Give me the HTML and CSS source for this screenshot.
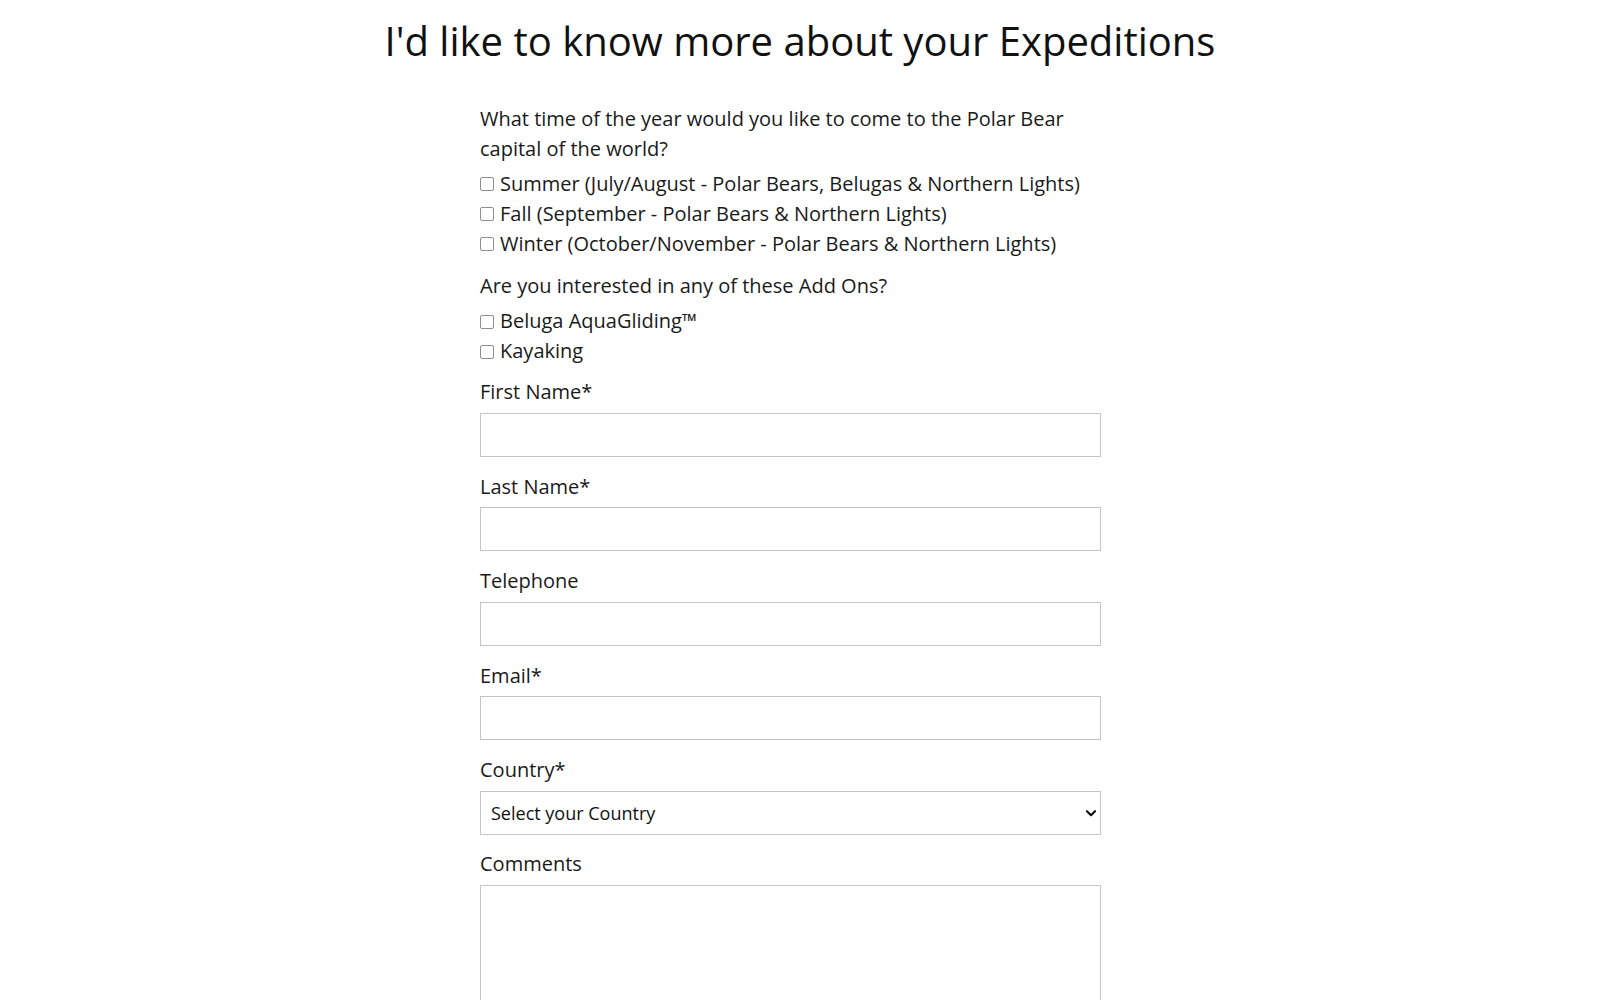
FILE: index.html
```html
<!DOCTYPE html>
<html lang="en">
<head>
<meta charset="utf-8">
<title>Expeditions enquiry</title>
<link rel="stylesheet" href="styles.css">
</head>
<body>
<h1 class="title">I'd like to know more about your Expeditions</h1>
<form class="enquiry">
  <p class="question">What time of the year would you like to come to the Polar Bear capital of the world?</p>
  <div class="options options-season">
    <label class="option"><input type="checkbox" class="check"><span>Summer (July/August - Polar Bears, Belugas &amp; Northern Lights)</span></label>
    <label class="option"><input type="checkbox" class="check"><span>Fall (September - Polar Bears &amp; Northern Lights)</span></label>
    <label class="option"><input type="checkbox" class="check"><span>Winter (October/November - Polar Bears &amp; Northern Lights)</span></label>
  </div>
  <p class="question">Are you interested in any of these Add Ons?</p>
  <div class="options options-addons">
    <label class="option"><input type="checkbox" class="check"><span>Beluga AquaGliding™</span></label>
    <label class="option"><input type="checkbox" class="check"><span>Kayaking</span></label>
  </div>
  <div class="field">
    <label class="field-label">First Name*</label>
    <input type="text" class="text-input">
  </div>
  <div class="field">
    <label class="field-label">Last Name*</label>
    <input type="text" class="text-input">
  </div>
  <div class="field">
    <label class="field-label">Telephone</label>
    <input type="text" class="text-input">
  </div>
  <div class="field">
    <label class="field-label">Email*</label>
    <input type="text" class="text-input">
  </div>
  <div class="field">
    <label class="field-label">Country*</label>
    <div class="select-wrap">
      <select class="select-input">
        <option>Select your Country</option>
      </select>
      <svg class="chevron" width="10" height="7" viewBox="0 0 10 7" aria-hidden="true"><path d="M1 1.2 L5 5.2 L9 1.2" fill="none" stroke="#111" stroke-width="2.2" stroke-linecap="round" stroke-linejoin="round"/></svg>
    </div>
  </div>
  <div class="field">
    <label class="field-label">Comments</label>
    <textarea class="textarea-input"></textarea>
  </div>
</form>
</body>
</html>
```

FILE: styles.css
```css
html, body {
  margin: 0;
  padding: 0;
  background: #ffffff;
}

body {
  font-family: "Open Sans", "Liberation Sans", sans-serif;
  color: #1a1a1a;
}

.title {
  margin: 0;
  padding-top: 14px;
  font-size: 40px;
  font-weight: 400;
  line-height: 54px;
  text-align: center;
  color: #111111;
}

.enquiry {
  width: 640px;
  margin: 36px auto 0;
  font-size: 20px;
}

.question {
  margin: 0;
  line-height: 30px;
  width: 600px;
}

.options {
  display: flex;
  flex-direction: column;
}

.options-season {
  margin: 5px 0 12.5px;
}

.options-addons {
  margin: 5.5px 0 11px;
}

.option {
  display: flex;
  align-items: center;
  height: 29.8px;
  line-height: 29.8px;
  gap: 6px;
}

.check {
  appearance: none;
  -webkit-appearance: none;
  width: 14px;
  height: 14px;
  margin: 1px 0 0 0;
  border: 1px solid #8e8e8e;
  border-radius: 2px;
  background: #fff;
  box-sizing: border-box;
  flex: none;
}

.field {
  margin-bottom: 14.4px;
}

.field-label {
  display: block;
  line-height: 30px;
  padding-top: 0.5px;
  margin-bottom: 5.5px;
}

.text-input,
.select-input,
.textarea-input {
  display: block;
  width: 621px;
  height: 44px;
  box-sizing: border-box;
  border: 1px solid #c4c4c4;
  border-radius: 0;
  background: #fff;
  margin: 0;
  font-family: "Open Sans", "Liberation Sans", sans-serif;
}

.select-wrap {
  position: relative;
  width: 621px;
}

.select-input {
  appearance: none;
  -webkit-appearance: none;
  padding: 0 30px 0 10px;
  font-size: 18px;
  color: #111;
}

.chevron {
  position: absolute;
  right: 5px;
  top: 19px;
  pointer-events: none;
}

.textarea-input {
  height: 170px;
  resize: none;
}
```
